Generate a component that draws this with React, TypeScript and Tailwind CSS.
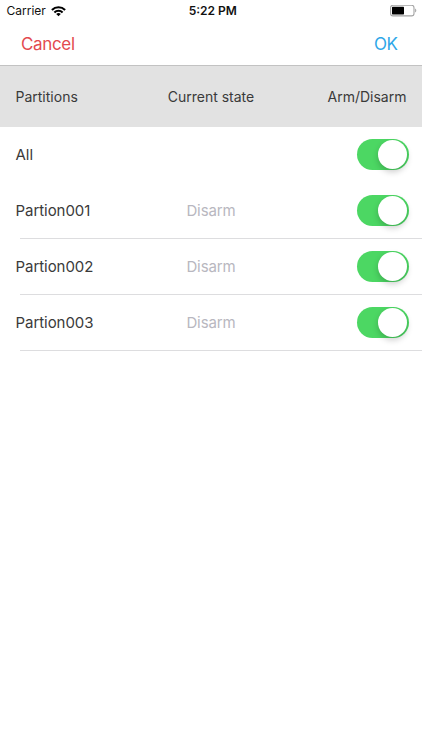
const rows = [
  { name: 'All', state: '' },
  { name: 'Partion001', state: 'Disarm' },
  { name: 'Partion002', state: 'Disarm' },
  { name: 'Partion003', state: 'Disarm' },
];

function WifiIcon() {
  return (
    <svg className="ml-[5.5px] h-[11px] w-[15px]" viewBox="0 0 15 11" fill="none" stroke="#000" strokeWidth="2.1">
      <path d="M.9 3.9a9.4 9.4 0 0 1 13.2 0" />
      <path d="M3.4 6.4a5.8 5.8 0 0 1 8.2 0" />
      <path d="M7.5 10.3 5.2 8a3.3 3.3 0 0 1 4.6 0Z" fill="#000" stroke="none" />
    </svg>
  );
}

function BatteryIcon() {
  return (
    <svg className="h-[12px] w-[28px]" viewBox="0 0 28 12">
      <rect x="0.6" y="0.3" width="23.4" height="10.6" rx="2.4" fill="#fff" stroke="#a3a3a3" strokeWidth="1.1" />
      <rect x="2" y="1.8" width="12" height="7.6" rx="0.6" fill="#000" />
      <path d="M25.1 3.6c1.6.5 1.6 3.5 0 4Z" fill="#a3a3a3" />
    </svg>
  );
}

function Toggle() {
  return (
    <div className="flex h-[31px] w-[52px] items-center justify-end rounded-full bg-[#4cd763] pr-[1.5px]">
      <div className="h-[29px] w-[29px] rounded-full bg-white shadow-[0_3px_6px_rgba(0,0,0,0.2)]" />
    </div>
  );
}

export default function App() {
  return (
    <div className="h-[750px] w-[422px] overflow-hidden bg-white font-['Inter','Liberation_Sans',sans-serif] text-[#3a3a3a]">
      <div className="grid h-[22px] grid-cols-3 items-center pr-[4px] pl-[6.5px] text-[12px] text-[#111]">
        <div className="flex items-center">
          <span>Carrier</span>
          <WifiIcon />
        </div>
        <span className="pl-[1px] text-center font-semibold">5:22 PM</span>
        <div className="flex justify-end">
          <BatteryIcon />
        </div>
      </div>
      <div className="flex h-[43px] items-center justify-between pt-[2px] pr-[24.5px] pl-[21px] text-[17px]">
        <button className="tracking-[-0.35px] text-[#e34a4f]">Cancel</button>
        <button className="tracking-[-0.4px] text-[#2ea7e8]">OK</button>
      </div>
      <div className="grid h-[62px] grid-cols-3 items-center border-t border-[#c2c2c2] bg-[#e2e2e2] px-[15.5px] text-[14px]">
        <span>Partitions</span>
        <span className="text-center">Current state</span>
        <span className="text-right">Arm/Disarm</span>
      </div>
      {rows.map((row) => (
        <div key={row.name}>
          <div className="grid h-[55px] grid-cols-3 items-center pr-[13.5px] pl-[15.5px] text-[15px]">
            <span className="pt-[2px] tracking-[-0.05px]">{row.name}</span>
            <span className="pt-[2px] pr-[2px] text-center tracking-[-0.1px] text-[#b8b7c0]">{row.state}</span>
            <div className="flex justify-end">
              <Toggle />
            </div>
          </div>
          <div className={row.state ? 'ml-[20px] h-px bg-[#dddddf]' : 'h-px'} />
        </div>
      ))}
    </div>
  );
}
